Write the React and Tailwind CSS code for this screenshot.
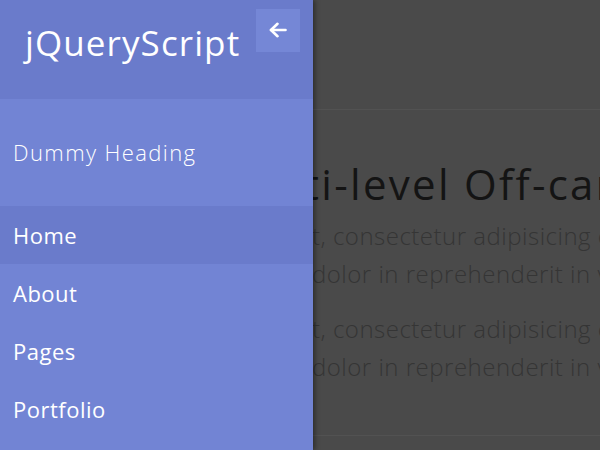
const menu = ["Home", "About", "Pages", "Portfolio"];

export default function App() {
  return (
    <div className="relative w-[600px] h-[450px] overflow-hidden bg-[#4a4a4a] font-['Open_Sans',sans-serif]">
      {/* page behind the overlay */}
      <header className="h-[110px] border-b border-[#525252]" />
      <main className="pl-[304px] pt-[45px] h-[326px] border-b border-[#525252] whitespace-nowrap">
        <h1 className="text-[42px] leading-[58px] tracking-[2.3px] text-[#141414] font-medium">ti-level Off-canvas Menu</h1>
        <p className="mt-[4px] text-[24px] leading-[38px] tracking-[0.5px] text-[#353535] font-light">
          <span className="block pl-[8px]">t, consectetur adipisicing elit</span>
          <span className="block pl-[8px]">dolor in reprehenderit in voluptate</span>
        </p>
        <p className="mt-[17px] text-[24px] leading-[38px] tracking-[0.5px] text-[#353535] font-light">
          <span className="block pl-[8px]">t, consectetur adipisicing elit</span>
          <span className="block pl-[8px]">dolor in reprehenderit in voluptate</span>
        </p>
      </main>

      {/* off-canvas sidebar */}
      <aside className="absolute left-0 top-0 h-full w-[313px] bg-[#7284d4] shadow-[2px_0_5px_rgba(0,0,0,0.4)] flex flex-col">
        <div className="h-[99px] bg-[#6a7bcb] flex justify-between pl-[25px] pr-[13px]">
          <span className="pt-[19px] text-[35px] leading-[48px] tracking-[1.1px] text-white font-medium">
            jQueryScript
          </span>
          <button className="mt-[9px] w-[44px] h-[43px] bg-[#7587d6] flex items-center justify-center pb-[2px] text-white">
            <svg width="18" height="16" viewBox="0 0 18 16" fill="none" stroke="currentColor" strokeWidth="2.6" strokeLinecap="round" strokeLinejoin="round">
              <path d="M16.5 8H2" />
              <path d="M8.5 1.8L2 8l6.5 6.2" />
            </svg>
          </button>
        </div>
        <div className="h-[107px] flex items-center pl-[13px] text-[22px] tracking-[1.4px] text-white font-light">
          Dummy Heading
        </div>
        <nav className="flex flex-col">
          {menu.map((m, i) => (
            <a
              key={m}
              className={`h-[58px] flex items-center pl-[13px] text-[22px] tracking-[0.5px] text-white ${i === 0 ? "bg-[#6a7bcb]" : ""}`}
            >
              {m}
            </a>
          ))}
        </nav>
      </aside>
    </div>
  );
}
